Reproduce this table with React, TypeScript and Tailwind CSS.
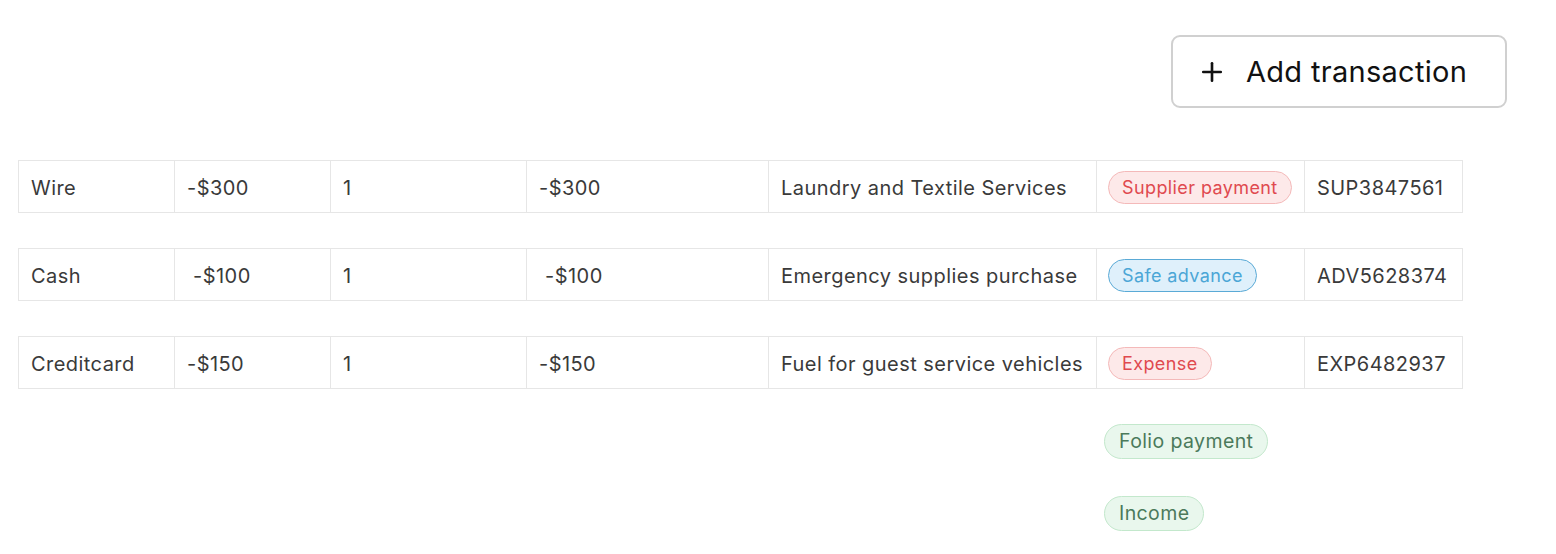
import { Plus } from 'lucide-react'

type Tone = 'red' | 'blue' | 'green'

const TONES: Record<Tone, string> = {
  red: 'bg-[#fde9e9] border-[#f4b9b9] text-[#e04a4f]',
  blue: 'bg-[#dff0fb] border-[#5aaad6] text-[#4ba6d6]',
  green: 'bg-[#e9f7ed] border-[#c3e8cc] text-[#4b7a5b]',
}

const ROWS: { method: string; amount: string; qty: string; total: string; desc: string; tag: string; tone: Tone; ref: string }[] = [
  { method: 'Wire', amount: '-$300', qty: '1', total: '-$300', desc: 'Laundry and Textile Services', tag: 'Supplier payment', tone: 'red', ref: 'SUP3847561' },
  { method: 'Cash', amount: ' -$100', qty: '1', total: ' -$100', desc: 'Emergency supplies purchase', tag: 'Safe advance', tone: 'blue', ref: 'ADV5628374' },
  { method: 'Creditcard', amount: '-$150', qty: '1', total: '-$150', desc: 'Fuel for guest service vehicles', tag: 'Expense', tone: 'red', ref: 'EXP6482937' },
]

function Badge({ label, tone, className = 'h-[33px] px-[13px] text-[18px]' }: { label: string; tone: Tone; className?: string }) {
  return (
    <span className={`inline-flex items-center rounded-full border tracking-[0.4px] whitespace-pre ${TONES[tone]} ${className}`}>
      {label}
    </span>
  )
}

function Cell({ children, className = '' }: { children: React.ReactNode; className?: string }) {
  return (
    <div className={`flex items-center px-3 pt-[2px] border-l border-[#e6e6e6] first:border-l-0 whitespace-pre ${className}`}>
      {children}
    </div>
  )
}

export default function App() {
  return (
    <div className="min-h-[554px] bg-white text-[#3a3a3a] pl-[18px]" style={{ fontFamily: 'Inter, "Noto Sans", sans-serif' }}>
      <div className="flex justify-end pr-[49px] pt-[35px]">
        <button className="flex items-center gap-[19px] w-[336px] h-[73px] pl-[24px] rounded-[9px] border-2 border-[#d0d0d0] text-[29px] tracking-[0.3px] text-[#111]">
          <Plus size={30} strokeWidth={2.1} />
          Add transaction
        </button>
      </div>
      <div className="flex flex-col gap-[35px] mt-[52px]">
        {ROWS.map((r) => (
          <div key={r.ref} className="grid grid-cols-[155px_156px_196px_242px_328px_208px_158px] w-[1445px] h-[53px] border border-[#e6e6e6] text-[20px] tracking-[0.45px]">
            <Cell>{r.method}</Cell>
            <Cell>{r.amount}</Cell>
            <Cell>{r.qty}</Cell>
            <Cell>{r.total}</Cell>
            <Cell>{r.desc}</Cell>
            <Cell className="px-[11px]"><Badge label={r.tag} tone={r.tone} /></Cell>
            <Cell>{r.ref}</Cell>
          </div>
        ))}
      </div>
      <div className="flex flex-col items-start gap-[37px] ml-[1086px] mt-[35px] pb-[22px]">
        <Badge label="Folio payment" tone="green" className="h-[35px] px-[14px] text-[19.5px]" />
        <Badge label="Income" tone="green" className="h-[35px] px-[14px] text-[19.5px]" />
      </div>
    </div>
  )
}
